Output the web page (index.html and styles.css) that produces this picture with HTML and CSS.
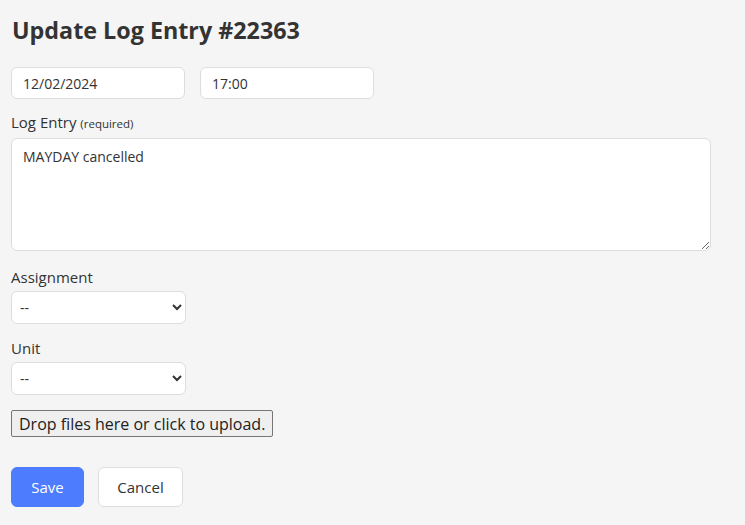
FILE: index.html
```html
<!doctype html>
<html lang="en">
    <head>
        <title>Update Log Entry #22363</title>
        <meta charset="utf-8" />
        <meta name="viewport" content="width=device-width, initial-scale=1"/>
        <link rel="stylesheet" href="styles.css">
    </head>
    <body>
        <form class="log-form">
            <h1>Update Log Entry #22363</h1>
            <div class="row">
                <input type="text" class="field" value="12/02/2024">
                <input type="text" class="field" value="17:00">
            </div>
            <label class="label">Log Entry <small>(required)</small></label>
            <textarea class="field entry">MAYDAY cancelled</textarea>
            <label class="label">Assignment</label>
            <select class="field pick">
                <option>--</option>
            </select>
            <label class="label">Unit</label>
            <select class="field pick">
                <option>--</option>
            </select>
            <div>
                <button type="button" class="dropzone">Drop files here or click to upload.</button>
            </div>
            <div class="actions">
                <button type="button" class="btn primary">Save</button>
                <button type="button" class="btn">Cancel</button>
            </div>
        </form>
    </body>
</html>
```

FILE: styles.css
```css
body {
    margin: 0;
    background-color: #f5f5f5;
    color: #333;
    font-family: "Open Sans", sans-serif;
}
.log-form {
    display: flex;
    flex-direction: column;
    align-items: flex-start;
    padding: 14px 11px;
}
h1 {
    font-size: 23.3px;
    font-weight: 700;
    line-height: 32px;
    margin: 0 0 21px 1px;
}
.row {
    display: flex;
    gap: 15px;
    margin-bottom: 13px;
}
.field {
    box-sizing: border-box;
    background-color: #fff;
    border: 1px solid #ddd;
    border-radius: 6px;
    color: #333;
    font-family: inherit;
    font-size: 14px;
    height: 32px;
    padding: 0 11px;
    width: 174px;
    outline: 0 none;
}
.label {
    font-size: 15px;
    line-height: 20px;
    margin-bottom: 4px;
}
.label small {
    font-size: 11.5px;
}
.entry {
    height: 113px;
    width: 700px;
    padding: 8px 11px;
    line-height: 20px;
    resize: vertical;
    margin-bottom: 16px;
}
.pick {
    width: 175px;
    height: 33px;
    padding: 0 4px;
    margin-bottom: 14px;
}
.dropzone {
    background-color: #efefef;
    border: 1px solid #767676;
    border-radius: 2px;
    color: #222;
    font-family: inherit;
    font-size: 16px;
    height: 27px;
    padding: 0 7px;
    margin-top: 1px;
}
.actions {
    display: flex;
    gap: 14px;
    margin-top: 30px;
}
.btn {
    background-color: #fff;
    border: 1px solid #ddd;
    border-radius: 6px;
    color: #333;
    font-family: inherit;
    font-size: 15px;
    height: 40px;
    width: 85px;
}
.btn.primary {
    background-color: #4d7cfe;
    border-color: #4d7cfe;
    color: #fff;
    width: 73px;
}
```
